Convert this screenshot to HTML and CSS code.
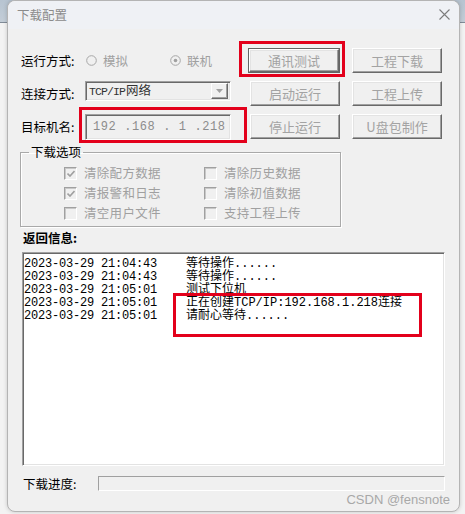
FILE: index.html
```html
<!DOCTYPE html>
<html>
<head>
    <meta charset="utf-8">
    <title>下载配置</title>
    <link rel="stylesheet" href="styles.css">
</head>
<body>
    <div class="window">
        <div class="titlebar">
            <span class="title">下载配置</span>
            <svg class="close" width="11" height="11" viewBox="0 0 11 11"><path d="M0.5 0.5L10.5 10.5M10.5 0.5L0.5 10.5" stroke="#7c7c7c" stroke-width="1.1" fill="none"/></svg>
        </div>

        <div class="content">
            <div class="top">
                <span class="lbl">运行方式:</span>
                <div class="radios">
                    <span class="radio"><svg width="11" height="11" viewBox="0 0 11 11"><circle cx="5.5" cy="5.5" r="4.8" fill="#f0f0f0" stroke="#a6a6a6"/></svg>模拟</span>
                    <span class="radio"><svg width="11" height="11" viewBox="0 0 11 11"><circle cx="5.5" cy="5.5" r="4.8" fill="#f0f0f0" stroke="#a6a6a6"/><circle cx="5.5" cy="5.5" r="1.8" fill="#a0a0a0"/></svg>联机</span>
                </div>
                <div class="cell"><button class="btn default">通讯测试<span class="mark mark-btn"></span></button></div>
                <div class="cell"><button class="btn">工程下载</button></div>

                <span class="lbl">连接方式:</span>
                <div class="combo">
                    <span class="combo-text"><span class="ascii">TCP/IP</span>网络</span>
                    <span class="combo-arrow"><svg width="7" height="4" viewBox="0 0 7 4"><path d="M0 0H7L3.5 4Z" fill="#a0a0a0"/></svg></span>
                </div>
                <div class="cell"><button class="btn">启动运行</button></div>
                <div class="cell"><button class="btn">工程上传</button></div>

                <span class="lbl">目标机名:</span>
                <div class="ip">192 .168 . 1 .218<span class="mark mark-ip"></span></div>
                <div class="cell"><button class="btn">停止运行</button></div>
                <div class="cell"><button class="btn">U盘包制作</button></div>
            </div>

            <fieldset class="group">
                <legend>下载选项</legend>
                <div class="checks">
                    <span class="check on"><span class="box"><svg width="8" height="7" viewBox="0 0 8 7"><path d="M0.5 3.5L3 6L7.5 1" stroke="#a0a0a0" stroke-width="1.6" fill="none"/></svg></span>清除配方数据</span>
                    <span class="check"><span class="box"></span>清除历史数据</span>
                    <span class="check on"><span class="box"><svg width="8" height="7" viewBox="0 0 8 7"><path d="M0.5 3.5L3 6L7.5 1" stroke="#a0a0a0" stroke-width="1.6" fill="none"/></svg></span>清报警和日志</span>
                    <span class="check"><span class="box"></span>清除初值数据</span>
                    <span class="check"><span class="box"></span>清空用户文件</span>
                    <span class="check"><span class="box"></span>支持工程上传</span>
                </div>
            </fieldset>

            <div class="section-lbl">返回信息:</div>
            <div class="log">
                <div class="log-row"><span class="ts">2023-03-29 21:04:43</span><span>等待操作......</span></div>
                <div class="log-row"><span class="ts">2023-03-29 21:04:43</span><span>等待操作......</span></div>
                <div class="log-row"><span class="ts">2023-03-29 21:05:01</span><span>测试下位机</span></div>
                <div class="log-row"><span class="ts">2023-03-29 21:05:01</span><span>正在创建TCP/IP:192.168.1.218连接</span></div>
                <div class="log-row"><span class="ts">2023-03-29 21:05:01</span><span>请耐心等待......</span></div>
                <span class="mark mark-log"></span>
            </div>

            <div class="progress-row">
                <span class="lbl">下载进度:</span>
                <div class="progress"></div>
            </div>
        </div>

        <span class="watermark">CSDN @fensnote</span>
    </div>
</body>
</html>
```

FILE: styles.css
```css
* {
    box-sizing: border-box;
}

html, body {
    margin: 0;
}

body {
    width: 465px;
    height: 514px;
    overflow: hidden;
    padding: 0 5px 0 7px;
    background: linear-gradient(#b7c4d1 0, #c3cdd7 22px, #808b97 22px, #808b97 23px, #f3f3f3 23px);
    font-family: "Noto Sans CJK SC", sans-serif;
    font-size: 12.5px;
    color: #000;
}

.window {
    position: relative;
    width: 453px;
    height: 512px;
    border: 1px solid #b4b4b4;
    border-radius: 8px;
    background-color: #f0f0f0;
    overflow: hidden;
    box-shadow: 0 0 4px rgba(0, 0, 0, 0.18);
}

.titlebar {
    height: 28px;
    background-color: #eff1f5;
    display: flex;
    align-items: center;
    justify-content: space-between;
    padding: 0 9px 1px 9px;
}

.title {
    color: #8b8b8b;
    font-size: 12.5px;
    line-height: 14px;
}

.content {
    padding: 19px 0 0 12px;
}

.top {
    display: grid;
    grid-template-columns: 65px 146px 109px 102px;
    grid-template-rows: repeat(3, 25px);
    row-gap: 8px;
}

.lbl {
    padding-left: 1px;
    line-height: 14px;
    align-self: center;
    white-space: nowrap;
}

.radios {
    display: grid;
    grid-template-columns: 84px auto;
    align-items: center;
    padding-left: 1px;
    color: #a0a0a0;
}

.radio {
    display: flex;
    align-items: center;
    gap: 6px;
    line-height: 14px;
}

.cell {
    justify-self: end;
    align-self: start;
}

.btn {
    position: relative;
    display: block;
    width: 90px;
    height: 25px;
    padding: 0;
    border: 1px solid;
    border-color: #fff #696969 #696969 #fff;
    box-shadow: inset -1px -1px #a0a0a0, inset 1px 1px #e3e3e3;
    background-color: #f0f0f0;
    font-family: inherit;
    font-size: 13px;
    line-height: 14px;
    color: #a3a3a3;
}

.btn.default {
    width: 92px;
    outline: 1px solid #646464;
    outline-offset: -1px;
    border-width: 2px;
    border-color: #fff #696969 #696969 #fff;
}

.mark {
    position: absolute;
    border: 3px solid #e3001b;
    pointer-events: none;
}

.mark-btn {
    left: -11px;
    top: -9px;
    right: -7px;
    bottom: -6px;
}

.combo {
    align-self: start;
    height: 20px;
    display: flex;
    align-items: center;
    justify-content: space-between;
    border: 1px solid;
    border-color: #a0a0a0 #fff #fff #a0a0a0;
    box-shadow: inset 1px 1px #696969, inset -1px -1px #e3e3e3;
    padding: 0 2px 0 3px;
    color: #333;
    font-size: 12.5px;
}

.combo-text {
    line-height: 14px;
}

.ascii {
    font-family: "Liberation Mono", monospace;
    font-size: 11.5px;
    letter-spacing: -0.9px;
    margin-right: 1px;
}

.combo-arrow {
    width: 17px;
    height: 16px;
    display: flex;
    align-items: center;
    justify-content: center;
    border: 1px solid;
    border-color: #fff #696969 #696969 #fff;
    box-shadow: inset -1px -1px #a0a0a0;
}

.ip {
    position: relative;
    height: 26px;
    display: flex;
    align-items: center;
    padding-left: 7px;
    border: 1px solid;
    border-color: #a0a0a0 #fff #fff #a0a0a0;
    box-shadow: inset 1px 1px #696969, inset -1px -1px #e3e3e3;
    font-family: "Liberation Mono", monospace;
    font-size: 12px;
    letter-spacing: 0.6px;
    white-space: pre;
    color: #8c8c8c;
}

.mark-ip {
    left: -7px;
    top: -8px;
    right: -17px;
    bottom: -4px;
}

.group {
    margin: 6px 0 0 0;
    width: 321px;
    min-inline-size: 0;
    padding: 0 0 3px 8px;
    border: 1px solid #a9a9a9;
    box-shadow: inset 1px 1px #fff, 1px 1px #fff;
}

.group legend {
    padding: 0 2px;
    line-height: 14px;
}

.checks {
    display: grid;
    grid-template-columns: 140px 130px;
    grid-auto-rows: 20px;
    margin: 4px 0 0 35px;
    color: #a0a0a0;
}

.check {
    display: flex;
    align-items: center;
    gap: 7px;
    line-height: 14px;
    letter-spacing: 0.3px;
    white-space: nowrap;
}

.box {
    width: 13px;
    height: 13px;
    display: flex;
    align-items: center;
    justify-content: center;
    border: 1px solid;
    border-color: #a0a0a0 #fff #fff #a0a0a0;
    box-shadow: inset 1px 1px #c8c8c8;
    background-color: #f0f0f0;
}

.section-lbl {
    margin: 4px 0 0 3px;
    line-height: 14px;
    font-weight: bold;
}

.log {
    position: relative;
    margin: 7px 0 0 2px;
    width: 423px;
    height: 214px;
    padding: 5px 0 0 1px;
    border: 1px solid;
    border-color: #a0a0a0 #fff #fff #a0a0a0;
    box-shadow: inset 1px 1px #696969, inset -1px -1px #e3e3e3;
    background-color: #fff;
    font-family: "Liberation Mono", "Noto Sans CJK SC", monospace;
    font-size: 12px;
}

.log-row {
    display: grid;
    grid-template-columns: 162px auto;
    height: 13px;
    line-height: 13px;
    white-space: pre;
}

.ts {
    letter-spacing: -0.2px;
}

.mark-log {
    left: 150px;
    top: 40px;
    width: 249px;
    height: 44px;
}

.progress-row {
    display: flex;
    align-items: center;
    margin: 10px 0 0 3px;
}

.progress-row .lbl {
    width: 75px;
    padding-left: 0;
}

.progress {
    width: 347px;
    height: 15px;
    border: 1px solid;
    border-color: #a0a0a0 #fff #fff #a0a0a0;
    background-color: #f0f0f0;
}

.watermark {
    position: absolute;
    right: 9px;
    bottom: 4px;
    font-family: "Liberation Sans", Arial, sans-serif;
    font-size: 13px;
    line-height: 15px;
    color: #a8a8a8;
}
```
